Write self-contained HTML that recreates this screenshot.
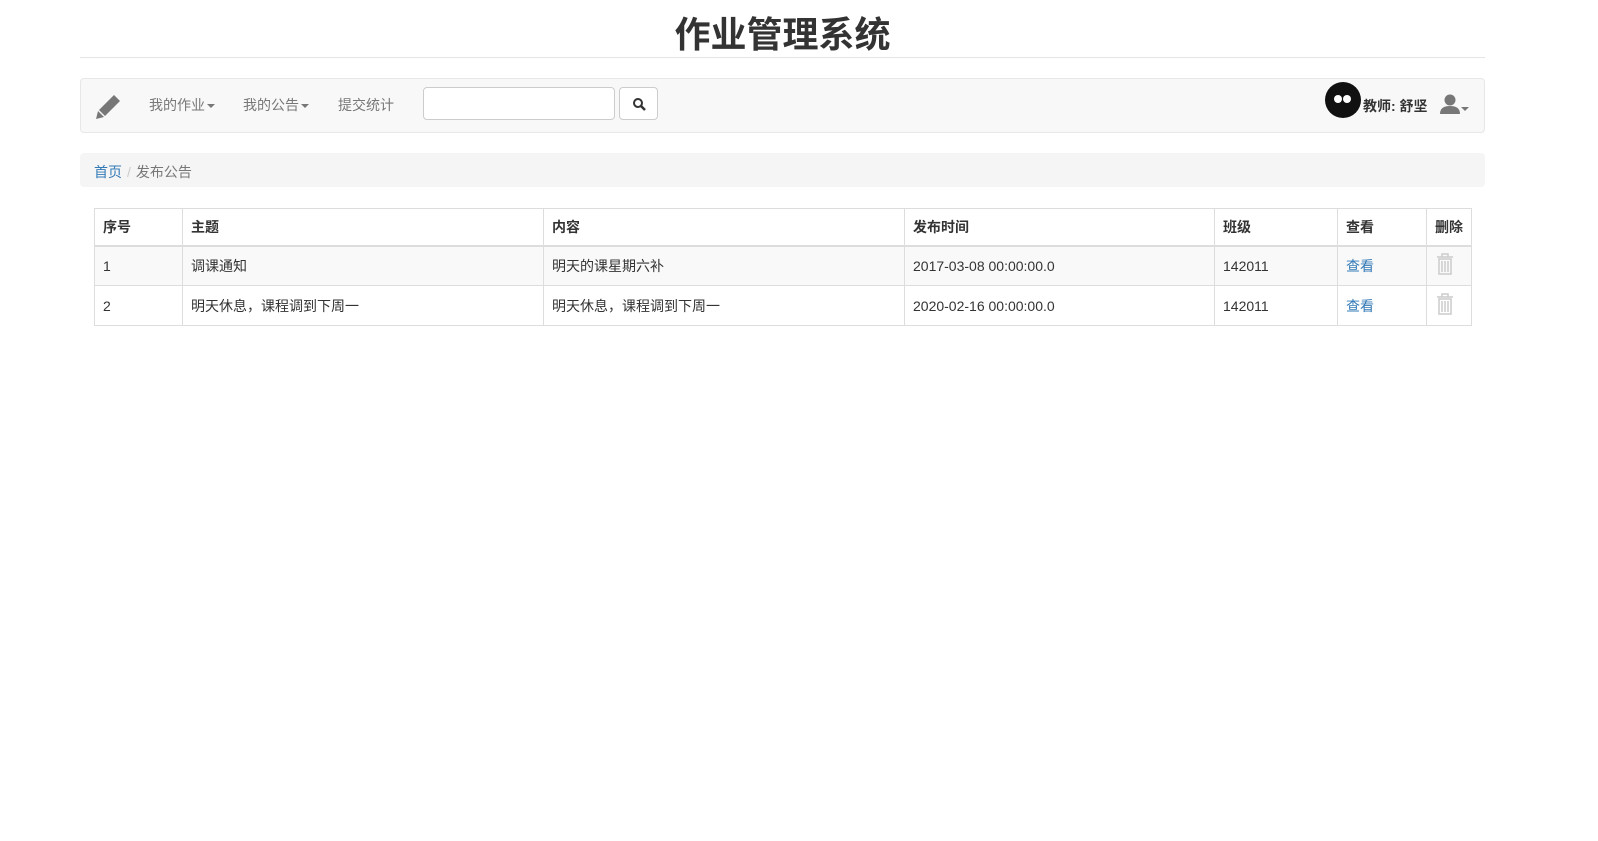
<!DOCTYPE html>
<html><head><meta charset="utf-8"><style>
*{box-sizing:border-box}
body{margin:0;background:#fff;font-family:"Liberation Sans","Noto Sans CJK SC",sans-serif;font-size:14px;color:#333}
.title{position:absolute;left:0;width:1565px;top:12px;text-align:center;font-size:36px;font-weight:bold;line-height:46px;color:#333}
.hr{position:absolute;left:80px;width:1405px;top:57px;border-top:1px solid #e5e5e5}
.nav{position:absolute;left:80px;top:78px;width:1405px;height:55px;background:#f8f8f8;border:1px solid #e7e7e7;border-radius:4px}
.nav .it{position:absolute;top:16px;color:#777;font-size:14px}
.caret{display:inline-block;width:0;height:0;border-top:4px solid #777;border-left:4px solid transparent;border-right:4px solid transparent;vertical-align:middle;margin-left:2px}
.inp{position:absolute;left:342px;top:8px;width:192px;height:33px;border:1px solid #ccc;border-radius:4px;background:#fff}
.btn{position:absolute;left:538px;top:8px;width:39px;height:33px;border:1px solid #ccc;border-radius:4px;background:#fff}
.bc{position:absolute;left:80px;top:153px;width:1405px;height:34px;background:#f5f5f5;border-radius:4px;padding:9px 14px;font-size:14px}
table{position:absolute;left:94px;top:208px;border-collapse:collapse;width:1377px;table-layout:fixed}
td,th{border:1px solid #ddd;padding:0 8px;text-align:left;font-size:14px;white-space:nowrap;overflow:hidden}
th{height:37px;font-weight:bold;border-bottom:2px solid #ddd}
td{height:40px}
tr.o td{background:#f9f9f9}
a{color:#337ab7;text-decoration:none}
</style></head><body>
<div class="title">作业管理系统</div>
<div class="hr"></div>
<div class="nav">
<svg style="position:absolute;left:14px;top:13px" width="28" height="28" viewBox="0 0 28 28"><path d="M19 3l6 6-15 15-6-6z" fill="#777"/><path d="M3 19l6 6-8 2z" fill="#777"/></svg>
<span class="it" style="left:68px">我的作业<span class="caret"></span></span>
<span class="it" style="left:162px">我的公告<span class="caret"></span></span>
<span class="it" style="left:257px">提交统计</span>
<div class="inp"></div>
<div class="btn"><svg style="position:absolute;left:12px;top:9px" width="14" height="14" viewBox="0 0 14 14"><circle cx="6" cy="6" r="4" stroke="#333" stroke-width="2" fill="none"/><path d="M9 9l4 4" stroke="#333" stroke-width="2.5"/></svg></div>
<div style="position:absolute;left:1244px;top:3px;width:36px;height:36px;border-radius:50%;background:#111"></div>
<div style="position:absolute;left:1253px;top:16px;width:8px;height:8px;border-radius:50%;background:#fff"></div>
<div style="position:absolute;left:1262px;top:16px;width:8px;height:8px;border-radius:50%;background:#fff"></div>
<span style="position:absolute;left:1282px;top:17px;font-weight:bold;color:#333">教师: 舒坚</span>
<svg style="position:absolute;left:1358px;top:14px" width="34" height="24" viewBox="0 0 34 24"><circle cx="11" cy="7" r="5.5" fill="#777"/><path d="M1 21c0-6 4-8 10-8s10 2 10 8z" fill="#777"/><path d="M22 14h8l-4 4z" fill="#777"/></svg>
</div>
<div class="bc"><a>首页</a><span style="color:#ccc;padding:0 5px">/</span><span style="color:#777">发布公告</span></div>
<table>
<colgroup><col style="width:88px"><col style="width:361px"><col style="width:361px"><col style="width:310px"><col style="width:123px"><col style="width:89px"><col style="width:45px"></colgroup>
<tr><th>序号</th><th>主题</th><th>内容</th><th>发布时间</th><th>班级</th><th>查看</th><th>删除</th></tr>
<tr class="o"><td>1</td><td>调课通知</td><td>明天的课星期六补</td><td>2017-03-08 00:00:00.0</td><td>142011</td><td><a>查看</a></td><td><svg width="20" height="24" viewBox="0 0 20 24"><path d="M2 5h16M7 5V2h6v3M4 7h12v15H4zM7 9v11M10 9v11M13 9v11" stroke="#ccc" stroke-width="1.5" fill="none"/></svg></td></tr>
<tr><td>2</td><td>明天休息，课程调到下周一</td><td>明天休息，课程调到下周一</td><td>2020-02-16 00:00:00.0</td><td>142011</td><td><a>查看</a></td><td><svg width="20" height="24" viewBox="0 0 20 24"><path d="M2 5h16M7 5V2h6v3M4 7h12v15H4zM7 9v11M10 9v11M13 9v11" stroke="#ccc" stroke-width="1.5" fill="none"/></svg></td></tr>
</table>
</body></html>
